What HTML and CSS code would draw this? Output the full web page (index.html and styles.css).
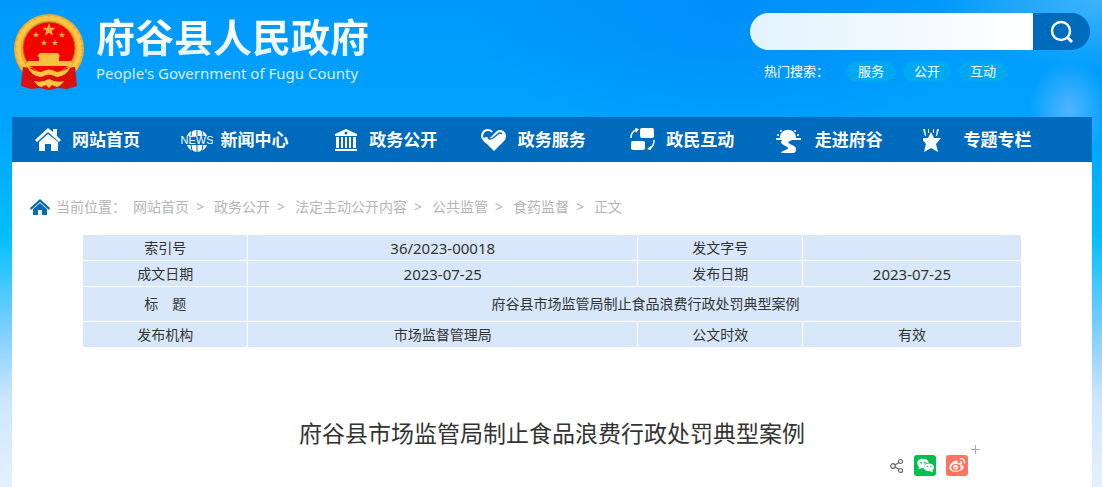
FILE: index.html
```html
<!DOCTYPE html>
<html lang="zh-CN">

<head>
    <meta charset="UTF-8">
    <meta name="viewport" content="width=device-width, initial-scale=1">
    <title>府谷县市场监管局制止食品浪费行政处罚典型案例</title>
    <link rel="stylesheet" href="styles.css">
</head>

<body>
    <div class="wrap">
        <header class="header">
            <a class="logo" href="#">
                <svg class="emblem" viewBox="0 0 72 78" aria-hidden="true">
                    <defs>
                        <path id="star" d="M0-10 2.4-3.2 9.5-3.1 3.8 1.2 5.9 8.1 0 4-5.9 8.1-3.8 1.2-9.5-3.1-2.4-3.2z" />
                    </defs>
                    <circle cx="37" cy="36" r="35" fill="#efaa2c" />
                    <circle cx="37" cy="36" r="31" fill="none" stroke="#fbc648" stroke-width="5" />
                    <circle cx="37" cy="36" r="33" fill="none" stroke="#dd9a25" stroke-width="1" stroke-dasharray="2 5" />
                    <circle cx="37" cy="35" r="26" fill="#f60000" stroke="#b8791a" />
                    <g fill="#e8b23c">
                        <use href="#star" transform="translate(37 17) scale(.7)" />
                        <use href="#star" transform="translate(24 22) scale(.34)" />
                        <use href="#star" transform="translate(50 22) scale(.34)" />
                        <use href="#star" transform="translate(32 30) scale(.34)" />
                        <use href="#star" transform="translate(43 30) scale(.34)" />
                    </g>
                    <path d="M28 40h18l2 3-1 1v4h12l2 5H14l2-5h11v-4l-2-1z" fill="#f8c03c" />
                    <path d="M11 54l9 1q7 7 17 7t17-7l9-1 2 19-10 3-9-1-9 2-9-2-9 1-10-3z" fill="#dc0f0c" />
                    <path d="M15 53q7 6 14 6 8-5 16 0 7 0 14-6-4 10-14 11l-8-3-8 3q-10-1-14-11zM22 68q8 2 15-2 7 4 15 2-3 5-7 6l-5-2-3 3-3-3-5 2q-4-1-7-6z" fill="#fbc543" />
                </svg>
                <span class="logo-text">
                    <strong>府谷县人民政府</strong>
                    <span class="logo-en">People's Government of Fugu County</span>
                </span>
            </a>
            <div class="search">
                <form class="search-form">
                    <input type="text" aria-label="搜索">
                    <button type="submit" aria-label="搜索">
                        <svg viewBox="0 0 24 24" width="24" height="24" fill="none" stroke="#fff" stroke-width="2.4"><circle cx="11" cy="11" r="9" /><path d="m17 17 5 5" stroke-width="3" /></svg>
                    </button>
                </form>
                <div class="hot">
                    <span>热门搜索：</span>
                    <a href="#">服务</a>
                    <a href="#">公开</a>
                    <a href="#">互动</a>
                </div>
            </div>
        </header>

        <nav class="nav">
            <a href="#">
                <svg viewBox="0 0 32 28" fill="#fff"><path d="M5 16 3 14 16 2l5 4V3h4v7l4 4-2 2L16 6z" /><path d="m16 8 10 8v9h-7v-7h-6v7H7v-9z" /></svg>
                <span>网站首页</span>
            </a>
            <a href="#">
                <svg viewBox="0 0 32 28"><path d="M6 10C9 2 23 2 26 10ZM6 19c3 9 17 9 20 0Z" fill="#fff" /><path d="M16 3v7M16 19v8M12 3q-2 3-2 7M20 3q2 3 2 7M10 19q0 5 3 8M22 19q0 5-3 8" fill="none" stroke="#006bbd" /><text x="16" y="18" text-anchor="middle" class="news-text">NEWS</text></svg>
                <span>新闻中心</span>
            </a>
            <a href="#">
                <svg viewBox="2 0 32 28" fill="#fff"><path fill-rule="evenodd" d="M16 3 27 8v2H5V8zM16 5.500a1.500 1.500 0 1 0 0 3 1.500 1.500 0 0 0 0-3zM6 11h3v11H6zM11 11h2v11h-2zM15 11h2v11h-2zM19 11h2v11h-2zM23 11h3v11h-3zM5 23h22v2H5z" transform="translate(3 0)" /></svg>
                <span>政务公开</span>
            </a>
            <a href="#">
                <svg viewBox="0 0 32 28"><path d="M6 15 16 25 26 15c4-4 2-11-4-11-3 0-4 2-6 4l-3 3q-2 2-4 0c-3 0-5 2-3 4z" fill="#fff" /><path d="M9 17 6 14C2 10 5 4 10 4q3 0 4 2" fill="none" stroke="#fff" stroke-width="2" /><path d="M10 12q2 2 5 0l5-4q2-2 4 0" fill="none" stroke="#006bbd" stroke-width="1.500" /></svg>
                <span>政务服务</span>
            </a>
            <a href="#">
                <svg viewBox="0 0 32 28" fill="#fff"><rect x="14" y="2" width="14" height="10" rx="2" /><rect x="5" y="15" width="14" height="9" rx="2" /><path d="M5 12q0-7 6-8M28 14q0 7-5 9" fill="none" stroke="#fff" stroke-width="1.500" /><path d="m9 2 4 1-3 4zM25 20v4l-4-1z" /></svg>
                <span>政民互动</span>
            </a>
            <a href="#">
                <svg viewBox="3 0 32 28" fill="#fff"><path d="M4 12h4C8 1 24 1 24 12h5v2h-9l-4 2c1 3 8 3 8 7s-2 4-4 4H9c1-3 7-3 7-5s-7-3-7-6l1-2H4z" /><circle cx="9" cy="5" r="1" /><circle cx="6" cy="9" r="1" /><circle cx="23" cy="5" r="1" /><circle cx="26" cy="9" r="1" /></svg>
                <span>走进府谷</span>
            </a>
            <a href="#">
                <svg viewBox="7 0 32 28" fill="#fff"><path d="m15 6 3 6h7l-5 6 2 8-7-4-7 4 2-8-5-6h7zM7 3h2l1 7H9zM12 3h1v4h-1zM17 3h1v4h-1zM21 3h2l-2 7h-1z" /></svg>
                <span>专题专栏</span>
            </a>
        </nav>

        <main class="main">
            <div class="crumbs">
                <svg viewBox="0 0 20 16" width="20" height="16" fill="#0c69b4"><path d="M0 9 10 0l10 9-1 2-9-8-9 8z" /><path d="m10 4 7 6v6h-5v-5H8v5H3v-6z" /></svg>
                <span class="here">当前位置：</span>
                <a href="#">网站首页</a><i>&gt;</i>
                <a href="#">政务公开</a><i>&gt;</i>
                <a href="#">法定主动公开内容</a><i>&gt;</i>
                <a href="#">公共监管</a><i>&gt;</i>
                <a href="#">食药监督</a><i>&gt;</i>
                <span>正文</span>
            </div>

            <table class="info">
                <colgroup>
                    <col class="col-label">
                    <col class="col-wide">
                    <col class="col-label">
                    <col>
                </colgroup>
                <tr>
                    <th>索引号</th>
                    <td class="num">36/2023-00018</td>
                    <th>发文字号</th>
                    <td></td>
                </tr>
                <tr>
                    <th>成文日期</th>
                    <td class="num">2023-07-25</td>
                    <th>发布日期</th>
                    <td class="num">2023-07-25</td>
                </tr>
                <tr class="title-row">
                    <th>标&emsp;题</th>
                    <td colspan="3">府谷县市场监管局制止食品浪费行政处罚典型案例</td>
                </tr>
                <tr>
                    <th>发布机构</th>
                    <td>市场监督管理局</td>
                    <th>公文时效</th>
                    <td>有效</td>
                </tr>
            </table>

            <h1>府谷县市场监管局制止食品浪费行政处罚典型案例</h1>

            <div class="share">
                <a class="share-icon" href="#" aria-label="分享">
                    <svg viewBox="0 0 14 16" width="14" height="16" fill="none" stroke="#666" stroke-width="1.200"><circle cx="3" cy="8" r="2.300" /><circle cx="10.500" cy="3.500" r="2" /><circle cx="10.500" cy="12.500" r="2" /><path d="m5 7 4-2.500M5 9l4 2.500" /></svg>
                </a>
                <a class="wechat" href="#" aria-label="微信">
                    <svg viewBox="0 0 22 22" width="22" height="21" fill="#fff"><path d="M9 4c-4 0-6 2-6 5 0 2 1 3 2 4l-1 2 3-1h3c0-4 2-6 5-6-1-3-3-4-6-4z" /><path d="M15 9c-3 0-5 2-5 4s2 4 5 4h2l2 1v-2c3-3 1-7-4-7z" /><g fill="#04be4d"><circle cx="7" cy="8" r="1" /><circle cx="11" cy="8" r="1" /><circle cx="13.500" cy="12" r=".7" /><circle cx="17" cy="12" r=".7" /></g></svg>
                </a>
                <a class="weibo" href="#" aria-label="微博">
                    <svg viewBox="0 0 22 22" width="22" height="21"><path d="M3 13c0-3 5-8 8-7 1 1 1 1 0 3 3-1 5-1 4 1 3 1 4 3 2 5-4 4-14 3-14-2z" fill="#fff" /><ellipse cx="10" cy="13" rx="5" ry="3.500" fill="#ff7360" /><circle cx="9.500" cy="13" r="2.500" fill="#fff" /><circle cx="9" cy="13.500" r="1" fill="#ff7360" /><path d="M14 4q5-1 5 5M14 7q2 0 2 2" fill="none" stroke="#fff" stroke-width="1.400" /></svg>
                    <span class="more"></span>
                </a>
            </div>
        </main>
    </div>
</body>

</html>
```
FILE: styles.css
```css
* {
    box-sizing: border-box;
}

body {
    margin: 0;
    min-height: 100vh;
    font-family: "Noto Sans", "Noto Sans CJK SC", sans-serif;
    font-size: 14px;
    line-height: 20px;
    color: #333;
    background:
        radial-gradient(ellipse 40px 50px at 97% 110px, rgba(100, 185, 255, .8), transparent),
        radial-gradient(ellipse 170px 70px at 100% 0, rgba(80, 185, 250, .8), transparent),
        radial-gradient(ellipse 260px 140px at 66% 10px, rgba(0, 138, 248, .7), transparent),
        linear-gradient(#0099fb 0, #00a2ff 120px, #00bfff 235px, #7ccfff 330px, #cde7fd 400px, #e3f1ff 487px);
}

a {
    color: inherit;
    text-decoration: none;
}

.wrap {
    max-width: 1200px;
    margin: 0 10px 0 12px;
}

/* header */
.header {
    display: flex;
    justify-content: space-between;
    height: 117px;
    padding-top: 13px;
    color: #fff;
}

.logo {
    display: flex;
    gap: 12px;
    align-items: flex-start;
}

.emblem {
    width: 72px;
    height: 78px;
}

.logo-text strong {
    display: block;
    font-size: 39px;
    line-height: 48px;
    background: linear-gradient(#fff 40%, #d9efff);
    -webkit-background-clip: text;
    background-clip: text;
    color: transparent;
}

.logo-en {
    display: block;
    font-size: 15px;
    line-height: 24px;
    color: #d5eeff;
}

.search {
    width: 340px;
    margin-right: 2px;
}

.search-form {
    display: flex;
    height: 37px;
    border-radius: 19px;
    overflow: hidden;
}

.search-form input {
    flex: 1;
    min-width: 0;
    padding: 0 18px;
    border: 0;
    background: linear-gradient(90deg, #e1f3ff, #fff);
}

.search-form button {
    width: 57px;
    padding: 4px 0 0;
    border: 0;
    background: #006bbd;
}

.hot {
    display: flex;
    gap: 8px;
    margin: 11px 0 0 14px;
    font-size: 13px;
    line-height: 21px;
}

.hot span {
    width: 75px;
}

.hot a {
    width: 48px;
    border-radius: 11px;
    text-align: center;
    background: #00a8f2;
}

/* nav */
.nav {
    display: grid;
    grid-template-columns: repeat(7, 1fr);
    height: 45px;
    padding: 0 20px;
    background: #006bbd;
    color: #fff;
    font-size: 17px;
    font-weight: bold;
}

.nav a {
    display: flex;
    gap: 8px;
    align-items: center;
}

.nav svg {
    width: 32px;
    height: 28px;
}

.news-text {
    font: 11px "Liberation Sans", sans-serif;
    fill: #fff;
}

/* content */
.main {
    min-height: calc(100vh - 162px);
    padding: 35px 18px 10px;
    background: #fff;
}

.crumbs {
    display: flex;
    align-items: center;
    color: #b5b5b5;
}

.crumbs svg {
    margin-right: 6px;
}

.crumbs .here {
    margin-right: 7px;
}

.crumbs i {
    margin: 0 10px 0 7px;
    font-style: normal;
}

.info {
    width: 90%;
    margin: 17px auto 0;
    table-layout: fixed;
    border-collapse: separate;
    border-spacing: 1px;
}

.info th,
.info td {
    height: 25px;
    padding: 0;
    text-align: center;
    font-weight: normal;
    background: #d8e7fa;
}

.info .num {
    font-size: 15px;
}

.info .title-row > * {
    height: 34px;
}

.info .title-row td {
    padding-left: 22px;
}

.col-label {
    width: 164px;
}

.col-wide {
    width: 389px;
}

h1 {
    margin: 69px 0 0;
    font-size: 23px;
    line-height: 32px;
    font-weight: normal;
    text-align: center;
}

.share {
    display: flex;
    justify-content: flex-end;
    gap: 10px;
    margin: 6px 106px 0 0;
}

.share a {
    display: flex;
    border-radius: 3px;
}

.share .share-icon {
    align-items: center;
}

.wechat {
    background: #04be4d;
}

.weibo {
    position: relative;
    background: #ff7360;
}

/* small plus over the corner of the last icon */
.more {
    position: absolute;
    top: -10px;
    right: -12px;
    width: 9px;
    height: 9px;
    background:
        linear-gradient(#aaa, #aaa) center / 1px 9px no-repeat,
        linear-gradient(#aaa, #aaa) center / 9px 1px no-repeat;
}
```
